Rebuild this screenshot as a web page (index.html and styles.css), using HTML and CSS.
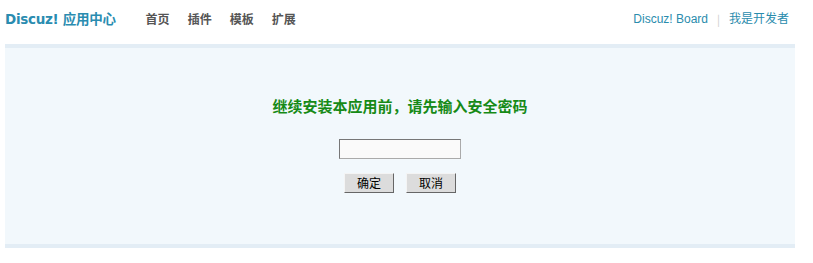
FILE: index.html
```html
<!DOCTYPE html>
<html>
<head>
<meta charset="utf-8">
<link rel="stylesheet" href="styles.css">
</head>
<body>
<div class="wrap">
  <div class="header">
    <div class="left">
      <span class="logo">Discuz! 应用中心</span>
      <ul class="nav">
        <li>首页</li>
        <li>插件</li>
        <li>模板</li>
        <li>扩展</li>
      </ul>
    </div>
    <div class="right">
      <a class="link">Discuz! Board</a>
      <span class="sep">|</span>
      <a class="link">我是开发者</a>
    </div>
  </div>
  <div class="box">
    <h2 class="title">继续安装本应用前，请先输入安全密码</h2>
    <div class="field"><input class="pw" type="password"></div>
    <div class="btns">
      <button class="btn">确定</button>
      <button class="btn">取消</button>
    </div>
  </div>
</div>
</body>
</html>
```
FILE: styles.css
```css
html, body {
  margin: 0;
  padding: 0;
  background: #fff;
  font-family: "Noto Sans CJK SC", "DejaVu Sans", sans-serif;
}
.wrap {
  width: 790px;
  margin-left: 5px;
}
.header {
  height: 44px;
  display: flex;
  justify-content: space-between;
  align-items: flex-start;
}
.left {
  display: flex;
  align-items: center;
  padding-top: 9px;
}
.logo {
  font-family: "DejaVu Sans", "Noto Sans CJK SC", sans-serif;
  font-size: 13.5px;
  font-weight: bold;
  color: #2a8cb0;
  line-height: 20px;
  letter-spacing: -0.3px;
}
.nav {
  display: flex;
  list-style: none;
  margin: 0 0 0 30px;
  padding: 0;
  gap: 18px;
}
.nav li {
  font-size: 12px;
  font-weight: bold;
  color: #555;
  line-height: 20px;
}
.right {
  display: flex;
  align-items: center;
  padding-top: 9px;
  padding-right: 6px;
  font-size: 12px;
  line-height: 20px;
}
.link {
  color: #2a8cad;
  font-family: "Liberation Sans", "Noto Sans CJK SC", sans-serif;
  font-size: 12px;
}
.sep {
  color: #ccc;
  margin: 0 9px;
  font-size: 11px;
}
.box {
  background: #f2f8fc;
  border-top: 4px solid #e3edf5;
  border-bottom: 4px solid #e3edf5;
  height: 196px;
  text-align: center;
  box-sizing: content-box;
}
.title {
  margin: 0;
  padding-top: 48px;
  font-size: 15px;
  font-weight: bold;
  color: #168a16;
  line-height: 20px;
}
.field {
  margin-top: 23px;
  display: flex;
  justify-content: center;
}
.pw {
  width: 122px;
  height: 20px;
  box-sizing: border-box;
  border: 1px solid #aaa;
  border-top-color: #777;
  border-left-color: #777;
  background: #fafafa;
  padding: 0;
  margin: 0;
}
.btns {
  margin-top: 14px;
  display: flex;
  justify-content: center;
  gap: 12px;
  padding-left: 0;
}
.btn {
  width: 50px;
  height: 20px;
  box-sizing: border-box;
  background: #dcdcdc;
  border: 1px solid;
  border-color: #f4f4f4 #666 #666 #f4f4f4;
  font-family: "Noto Sans CJK SC", sans-serif;
  font-size: 12px;
  line-height: 16px;
  padding: 0;
  color: #000;
}
```
